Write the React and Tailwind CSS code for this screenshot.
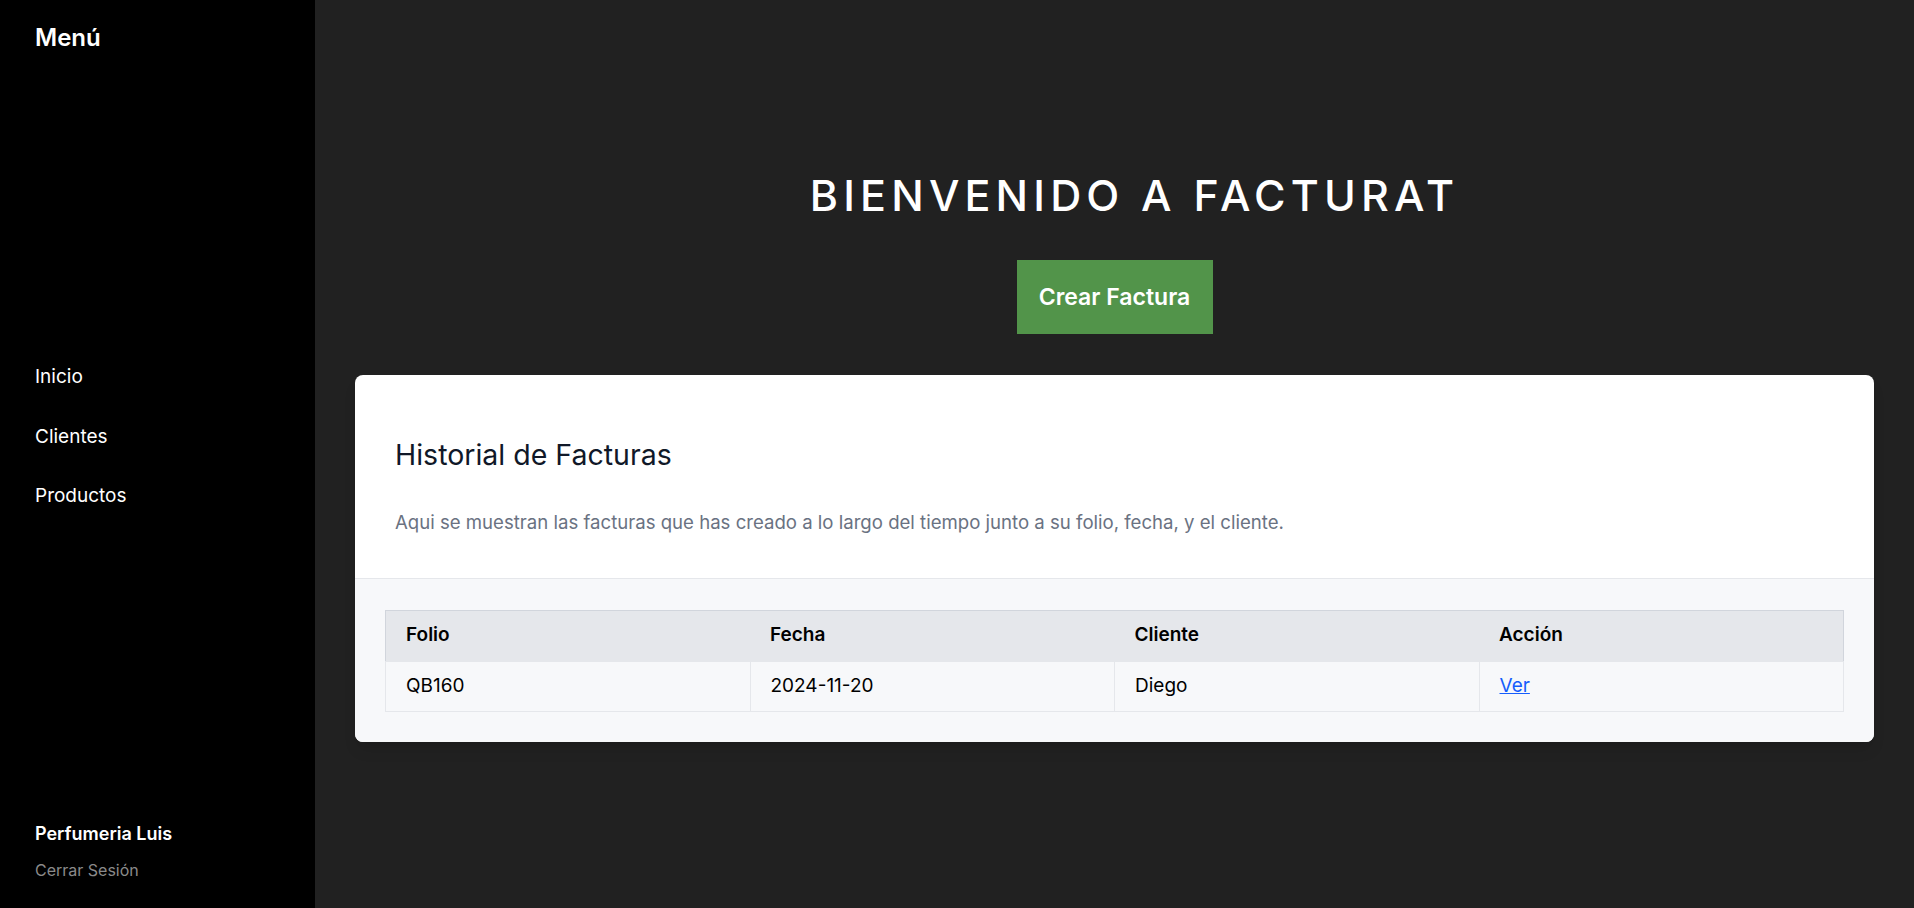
const facturas = [
  { folio: 'QB160', fecha: '2024-11-20', cliente: 'Diego' },
];

export default function App() {
  return (
    <div className="flex h-[908px] w-full font-['Inter',sans-serif]">
      <aside className="flex w-[315px] shrink-0 flex-col justify-between bg-black px-[35px] pt-[22px] pb-[26px] text-white">
        <h1 className="text-2xl font-semibold">Menú</h1>
        <nav className="flex flex-col gap-[31px] text-[19px]">
          <a href="#">Inicio</a>
          <a href="#">Clientes</a>
          <a href="#">Productos</a>
        </nav>
        <div>
          <p className="text-lg font-semibold">Perfumeria Luis</p>
          <button className="mt-[10px] text-base text-[#8a8a8a]">Cerrar Sesión</button>
        </div>
      </aside>

      <main className="flex flex-1 flex-col items-center bg-[#212121] px-10 pt-[174px]">
        <h2 className="pl-10 text-[43px] leading-none font-medium tracking-[0.12em] text-white">BIENVENIDO A FACTURAT</h2>
        <button className="mt-[43px] h-[74px] w-[196px] bg-[#52944a] text-[23px] font-semibold text-white">
          Crear Factura
        </button>

        <div className="mt-[41px] w-full overflow-hidden rounded-lg bg-white shadow-lg">
          <div className="px-10 pt-[59px] pb-[41px]">
            <h3 className="text-[28.5px] text-gray-900">Historial de Facturas</h3>
            <p className="mt-[32px] text-[18.6px] text-gray-500">
              Aqui se muestran las facturas que has creado a lo largo del tiempo junto a su folio, fecha, y el cliente.
            </p>
          </div>
          <div className="border-t border-gray-200 bg-[#f7f8fa] px-[30px] pt-[31px] pb-[30px]">
            <table className="w-full table-fixed border-collapse text-[19px] text-black">
              <thead>
                <tr className="h-[51px] border border-gray-300 bg-gray-200 text-left">
                  <th className="px-5 font-semibold">Folio</th>
                  <th className="px-5 font-semibold">Fecha</th>
                  <th className="px-5 font-semibold">Cliente</th>
                  <th className="px-5 font-semibold">Acción</th>
                </tr>
              </thead>
              <tbody>
                {facturas.map((f) => (
                  <tr key={f.folio} className="h-[50px]">
                    <td className="border border-gray-200 px-5">{f.folio}</td>
                    <td className="border border-gray-200 px-5">{f.fecha}</td>
                    <td className="border border-gray-200 px-5">{f.cliente}</td>
                    <td className="border border-gray-200 px-5">
                      <a href="#" className="text-blue-600 underline">Ver</a>
                    </td>
                  </tr>
                ))}
              </tbody>
            </table>
          </div>
        </div>
      </main>
    </div>
  );
}
